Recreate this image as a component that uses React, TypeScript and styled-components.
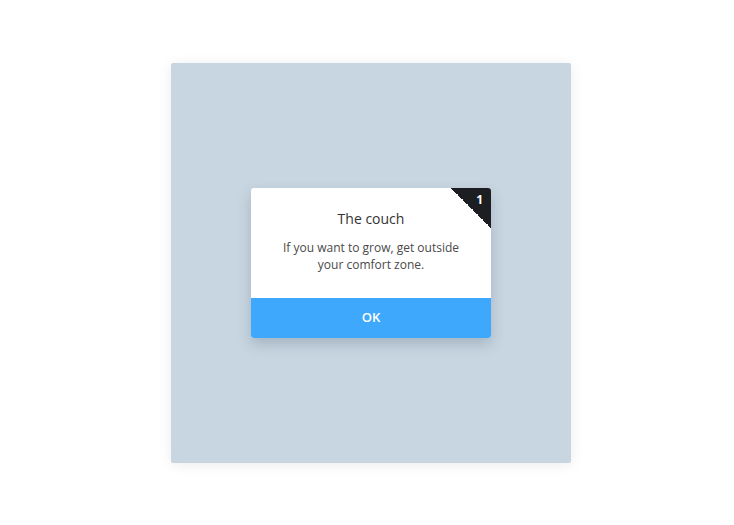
import React from "react";
import styled, { createGlobalStyle } from "styled-components";

const GlobalStyle = createGlobalStyle`
  html, body {
    margin: 0;
    padding: 0;
    background: #ffffff;
    font-family: "Open Sans", "Noto Sans", sans-serif;
  }
`;

const Page = styled.div`
  min-height: 100vh;
  box-sizing: border-box;
  display: flex;
  align-items: center;
  justify-content: center;
  padding-left: 8px;
`;

const Stage = styled.div`
  width: 400px;
  height: 400px;
  background: #c8d6e1;
  border-radius: 2px;
  box-shadow: 0 2px 14px rgba(0, 0, 0, 0.08);
  display: flex;
  align-items: center;
  justify-content: center;
`;

const Dialog = styled.div`
  position: relative;
  width: 240px;
  background: #ffffff;
  border-radius: 3px;
  overflow: hidden;
  box-shadow: 0 6px 14px rgba(40, 60, 80, 0.22);
  display: flex;
  flex-direction: column;
`;

const Corner = styled.div`
  position: absolute;
  top: 0;
  right: 0;
  width: 40px;
  height: 40px;
  background: linear-gradient(45deg, transparent 50%, #1d1e22 50%);
`;

const Badge = styled.span`
  position: absolute;
  top: 4px;
  right: 8px;
  font-size: 12px;
  font-weight: 700;
  line-height: 16px;
  color: #ffffff;
`;

const Body = styled.div`
  padding: 21px 20px 25px;
  display: flex;
  flex-direction: column;
  align-items: center;
  gap: 10px;
  text-align: center;
`;

const Title = styled.h2`
  margin: 0;
  font-size: 14px;
  line-height: 20px;
  font-weight: 500;
  color: #333333;
`;

const Message = styled.p`
  margin: 0;
  font-size: 12px;
  line-height: 17px;
  font-weight: 400;
  color: #4a4a4a;
`;

const OkButton = styled.button`
  height: 40px;
  padding: 0 0 2px;
  border: none;
  background: #3ea8fc;
  color: #ffffff;
  font-family: inherit;
  font-size: 13px;
  font-weight: 600;
  cursor: pointer;
`;

export default function App() {
  return (
    <>
      <GlobalStyle />
      <Page>
        <Stage>
          <Dialog>
            <Corner>
              <Badge>1</Badge>
            </Corner>
            <Body>
              <Title>The couch</Title>
              <Message>
                If you want to grow, get outside
                <br />
                your comfort zone.
              </Message>
            </Body>
            <OkButton>OK</OkButton>
          </Dialog>
        </Stage>
      </Page>
    </>
  );
}
